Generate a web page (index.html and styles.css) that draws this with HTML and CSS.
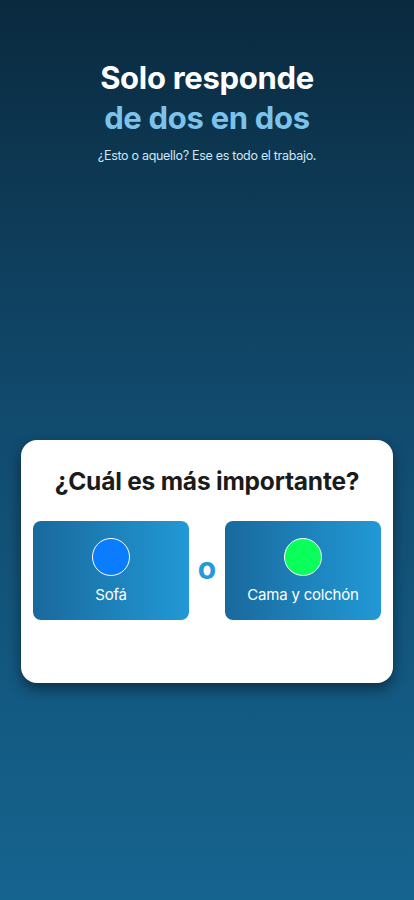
FILE: index.html
```html
<!DOCTYPE html>
<html lang="es">

<head>
    <meta charset="UTF-8">
    <meta name="viewport" content="width=device-width, initial-scale=1.0">
    <title>Solo responde de dos en dos</title>
    <link rel="stylesheet" href="styles.css">
</head>

<body>
    <div class="screen">
        <header class="intro">
            <h1>Solo responde<br><span>de dos en dos</span></h1>
            <p>¿Esto o aquello? Ese es todo el trabajo.</p>
        </header>

        <div class="card">
            <h2>¿Cuál es más importante?</h2>
            <div class="options">
                <button class="option">
                    <span class="dot blue"></span>
                    <span class="label">Sofá</span>
                </button>
                <span class="or">o</span>
                <button class="option">
                    <span class="dot green"></span>
                    <span class="label">Cama y colchón</span>
                </button>
            </div>
        </div>
    </div>
</body>

</html>
```

FILE: styles.css
```css
* {
    margin: 0;
    padding: 0;
    box-sizing: border-box;
    font-family: Inter, 'Liberation Sans', sans-serif;
}

body {
    background: #0b2b40;
}

.screen {
    width: 414px;
    height: 900px;
    background: linear-gradient(180deg, #0a2a3f 0%, #114a6d 45%, #15648f 100%);
    display: flex;
    flex-direction: column;
    align-items: center;
    padding: 58px 21px 0;
}

.intro {
    text-align: center;
}

.intro h1 {
    font-size: 31px;
    line-height: 40px;
    font-weight: 700;
    color: #ffffff;
    letter-spacing: -0.3px;
}

.intro h1 span {
    color: #7cc3ec;
}

.intro p {
    margin-top: 10px;
    font-size: 12.5px;
    color: #cfe6f5;
    letter-spacing: -0.3px;
}

.card {
    margin-top: 277px;
    width: 372px;
    height: 243px;
    background: #ffffff;
    border-radius: 16px;
    box-shadow: 0 6px 14px rgba(0, 0, 0, 0.45);
    padding: 26px 12px 0;
}

.card h2 {
    text-align: center;
    font-size: 24.5px;
    line-height: 30px;
    font-weight: 700;
    color: #1b1b1b;
    letter-spacing: -0.2px;
}

.options {
    margin-top: 25px;
    display: flex;
    align-items: center;
    justify-content: space-between;
}

.option {
    width: 156px;
    height: 99px;
    border: none;
    border-radius: 8px;
    background: linear-gradient(90deg, #19699d 0%, #2199d6 100%);
    display: flex;
    flex-direction: column;
    align-items: center;
    padding-top: 17px;
}

.dot {
    width: 38px;
    height: 38px;
    border-radius: 50%;
    border: 1.5px solid #ffffff;
}

.dot.blue {
    background: #0a7cff;
}

.dot.green {
    background: #0bff5a;
}

.label {
    margin-top: 9px;
    font-size: 15px;
    color: #ffffff;
    letter-spacing: -0.2px;
}

.or {
    font-size: 30px;
    font-weight: 700;
    color: #2799d8;
    line-height: 1;
    padding-bottom: 5px;
}
```
